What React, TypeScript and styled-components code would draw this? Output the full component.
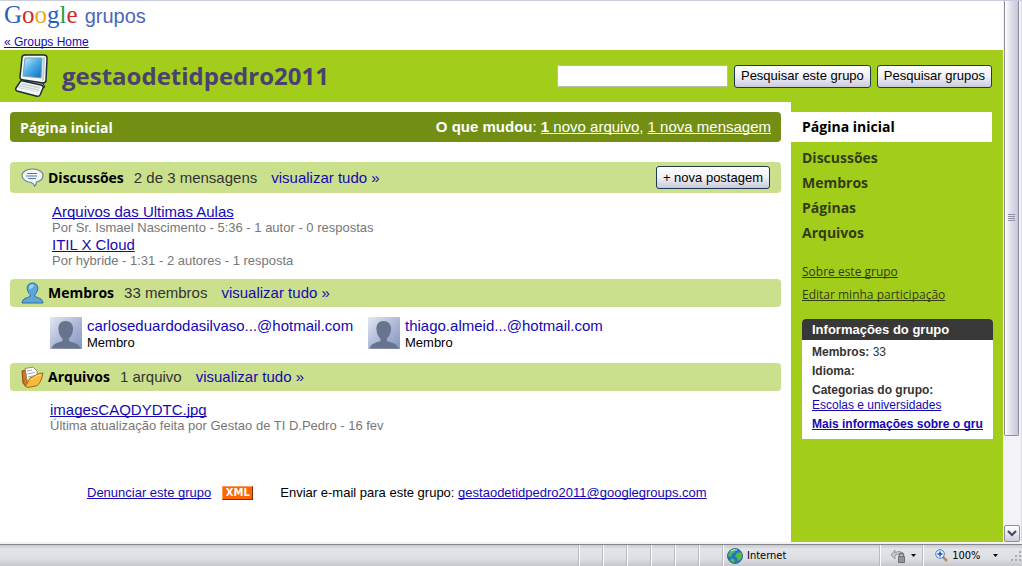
import React from "react";
import styled, { createGlobalStyle } from "styled-components";

const sans = `"Liberation Sans", Arial, sans-serif`;
const heading = `"Open Sans", "Noto Sans", sans-serif`;

const GlobalStyle = createGlobalStyle`
  * { box-sizing: border-box; }
  body {
    margin: 0;
    background: #fff;
    color: #000;
    font: 13px/16px ${sans};
    text-decoration-skip-ink: none;
  }
  h1, h2, h3, p, ul { margin: 0; padding: 0; }
  ul { list-style: none; }
  a { color: #1508b4; }
  svg { display: block; flex: none; }
`;

const Window = styled.div`
  min-height: 100vh;
  display: flex;
  flex-direction: column;
`;

const Viewport = styled.div`
  flex: 1;
  display: flex;
  border-top: 1px solid #c9cde0;
  border-bottom: 2px solid #f1f1f4;
`;

const Page = styled.div`
  flex: 1;
  min-width: 0;
  display: flex;
  flex-direction: column;
`;

const TopBar = styled.header`
  height: 49px;
  padding-left: 4px;
`;

const Logo = styled.div`
  display: flex;
  align-items: baseline;
  gap: 7px;
  height: 33px;
  line-height: 28px;
`;

const Wordmark = styled.span`
  font-family: "Liberation Serif", serif;
  font-size: 25px;
  -webkit-text-stroke: 1px transparent;
`;

const Letter = styled.span<{ $color: string }>`
  color: ${(p) => p.$color};
`;

const Product = styled.span`
  font-size: 20px;
  color: #4d66b8;
`;

const HomeLink = styled.a`
  display: block;
  width: fit-content;
  font-size: 12px;
`;

const Banner = styled.div`
  height: 52px;
  padding: 0 11px 0 14px;
  display: flex;
  align-items: center;
  background: #a2ce1b;
`;

const GroupName = styled.h1`
  flex: 1;
  margin-left: 14px;
  font: 700 24px/32px ${heading};
  color: #4a4170;
`;

const SearchForm = styled.form`
  display: flex;
  align-items: center;
  gap: 6px;
`;

const SearchInput = styled.input`
  width: 171px;
  height: 22px;
  padding: 0 4px;
  border: 1px solid #b5bfa5;
  background: #fff;
  font: 13px ${sans};
`;

const Button = styled.button`
  height: 23px;
  padding: 0 6px 1px;
  border: 1px solid #1d3a55;
  border-radius: 3px;
  background: linear-gradient(#fff, #f1f1f6 50%, #c9c9dc);
  color: #000;
  font: 13px ${sans};
  white-space: nowrap;
`;

const Columns = styled.div`
  flex: 1;
  display: flex;
`;

const Main = styled.main`
  flex: 1;
  min-width: 0;
  padding: 10px;
`;

const TitleBar = styled.div`
  height: 30px;
  margin-bottom: 20px;
  padding: 0 10px;
  display: flex;
  align-items: center;
  justify-content: space-between;
  border-radius: 4px;
  background: #728f14;
  color: #fff;
  font-size: 15px;
  a { color: #fff; }
`;

const PageTitle = styled.h2`
  padding-top: 2px;
  font: 700 14px/20px ${heading};
`;

const SectionBar = styled.div<{ $tall?: boolean }>`
  height: ${(p) => (p.$tall ? 31 : 28)}px;
  padding: 0 11px;
  display: flex;
  align-items: center;
  border-radius: 4px;
  background: #cae08c;
  font-size: 15px;
  color: #333;
`;

const SectionTitle = styled.h3`
  margin: 0 10px 0 4px;
  font: 700 14px/20px ${heading};
  color: #000;
`;

const SeeAll = styled.a`
  margin: 0 auto 0 14px;
  text-decoration: none;
`;

const List = styled.ul<{ $indent: number }>`
  padding: 10px 0 10px ${(p) => p.$indent}px;
`;

const ItemLink = styled.a`
  display: block;
  width: fit-content;
  font-size: 15px;
  line-height: 17px;
`;

const Meta = styled.p`
  color: #777;
`;

const Members = styled.ul`
  padding: 10px 0 12px 40px;
  display: flex;
`;

const Member = styled.li`
  width: 318px;
  display: flex;
  gap: 5px;
  a { display: block; font-size: 15px; line-height: 18px; text-decoration: none; }
`;

const Footer = styled.footer`
  padding: 41px 0 16px 77px;
  display: flex;
  align-items: center;
`;

const XmlBadge = styled.a`
  width: 31px;
  height: 14px;
  margin: 0 27px 0 11px;
  border: 1px solid;
  border-color: #ff9a55 #7a3000 #7a3000 #ff9a55;
  background: #f60;
  color: #fff;
  font: 700 10px/12px "DejaVu Sans", sans-serif;
  text-align: center;
  text-decoration: none;
`;

const Sidebar = styled.aside`
  width: 212px;
  padding: 10px 0;
  background: #a2ce1b;
`;

const NavLink = styled.a<{ $active?: boolean }>`
  display: block;
  margin: 0 11px ${(p) => (p.$active ? 3 : 0)}px 0;
  padding-left: 11px;
  font: 700 14px/${(p) => (p.$active ? 30 : 25)}px ${heading};
  background: ${(p) => (p.$active ? "#fff" : "none")};
  color: ${(p) => (p.$active ? "#000" : "#333c12")};
  text-decoration: none;
`;

const SideLinks = styled.ul`
  padding: 15px 0 13px 11px;
  font: 12px/23px ${heading};
  a { color: #333c12; }
`;

const InfoBox = styled.section`
  margin: 0 10px 0 11px;
  border-radius: 4px 4px 0 0;
  background: #fff;
  overflow: hidden;
  font-size: 12px;
  line-height: 15px;
  color: #333;
`;

const InfoTitle = styled.h3`
  padding: 0 10px;
  background: #383838;
  color: #fff;
  font: 700 13px/21px ${sans};
`;

const InfoBody = styled.div`
  padding: 5px 10px 7px;
  display: flex;
  flex-direction: column;
  gap: 4px;
`;

const InfoRow = styled.div`
  overflow: hidden;
  white-space: nowrap;
`;

const Scrollbar = styled.div`
  width: 19px;
  padding: 0 2px 0 1px;
  display: flex;
  flex-direction: column;
  background: #f3f3f7;
  border-right: 1px solid #dcdce6;
`;

const Thumb = styled.div`
  flex: 83;
  display: flex;
  align-items: center;
  justify-content: center;
  border: 1px solid #8d8d9b;
  border-top: 0;
  border-radius: 0 0 2px 2px;
  background: linear-gradient(90deg, #fff, #e3e3ec 40%, #c6c6d8);
`;

const Track = styled.div`
  flex: 17;
`;

const ScrollButton = styled.button`
  width: 16px;
  height: 17px;
  padding: 0;
  display: flex;
  align-items: center;
  justify-content: center;
  border: 1px solid #8d8d9b;
  border-radius: 2px;
  background: linear-gradient(#fff, #cfcfdd);
`;

const StatusBar = styled.div`
  height: 22px;
  display: flex;
  border-top: 1px solid #85858c;
  background: linear-gradient(#c9cacf, #e4e5e9 20%, #dcdde2 70%, #c5c6cc);
  font: 11px/20px "DejaVu Sans Condensed", "DejaVu Sans", sans-serif;
`;

const StatusCell = styled.div<{ $width?: number }>`
  ${(p) => (p.$width ? `width: ${p.$width}px;` : "flex: 1;")}
  padding-left: 4px;
  display: flex;
  align-items: center;
  gap: 4px;
  & + & { border-left: 1px solid #b9bac2; box-shadow: inset 1px 0 #fafafc; }
`;

const Push = styled.span`
  flex: 1;
`;

const ComputerIcon = () => (
  <svg width="34" height="44" viewBox="0 0 34 44" aria-hidden="true">
    <defs>
      <linearGradient id="screen" x1="0" y1="0" x2="1" y2="1">
        <stop offset="0" stopColor="#d3effb" />
        <stop offset=".45" stopColor="#4fb0e8" />
        <stop offset="1" stopColor="#0b69b8" />
      </linearGradient>
    </defs>
    <path d="M14 26l14 2 3 5-7 3-10-4z" fill="#aeb8bc" stroke="#1e2b35" />
    <path d="M8 4q0-3 3-3h19q3 0 3 3l-1 22q0 3-3 3L10 26q-4 0-4-3z" fill="#f6fafc" stroke="#1e2b35" strokeWidth="1.5" />
    <path d="M29 3h2l-1 23-2 1z" fill="#c3cdd2" />
    <path d="M11 4h17l-1 20L9 22z" fill="url(#screen)" stroke="#7f9bab" />
    <path d="M9 27l18 4q3 1 2 3l-3 7q-1 2-4 1L3 37q-2-1-1-3l4-6q1-2 3-1z" fill="#f4f7f8" stroke="#1e2b35" strokeWidth="1.5" />
    <path d="M8 29l18 4-2 5L4 34z" fill="#cbd2d6" />
    <path d="M7 31l18 4M6 33l18 4" stroke="#eef1f3" fill="none" />
  </svg>
);

const SpeechIcon = () => (
  <svg width="23" height="19" viewBox="0 0 23 19" aria-hidden="true">
    <path d="M11.5 1C5 1 1 4 1 7.500C1 11 5 14 10 14.500q3 1 3.500 3.500q2-1.500 2-4C20 13 22 10.500 22 7.500C22 4 18 1 11.500 1z" fill="#f3f6fb" stroke="#71808c" strokeWidth="1.200" />
    <path d="M6 5.500h10M5 8h11M7 10.500h8" stroke="#5576a4" strokeWidth="1.200" />
  </svg>
);

const MemberIcon = () => (
  <svg width="23" height="22" viewBox="0 0 23 22" aria-hidden="true">
    <path d="M11.500 1C8 1 6 3.500 6.200 6.500c.2 3 1.500 4.500 2.800 6v2C6 16 1.500 16 1 21h21c-.5-5-5-5-8-6.500v-2c1.300-1.500 2.600-3 2.800-6C17 3.500 15 1 11.500 1z" fill="#5ca6dc" stroke="#2f6a99" />
    <path d="M11 2.500C8.500 2.700 7.500 5 8.500 7.500q3-1 5-4.500z" fill="#9fd2f5" />
  </svg>
);

const FolderIcon = () => (
  <svg width="23" height="22" viewBox="0 0 23 22" aria-hidden="true">
    <path d="M1 5l4-1 2 2v13l-2 2L2 17z" fill="#d9701d" stroke="#8a4a10" />
    <path d="M4 2.500L12 1l4 4 1 11-10 3z" fill="#fff" stroke="#8b8b80" />
    <path d="M6 5l5-1M6.500 8l7-1.500M7 11l7-1.500" stroke="#a4a49c" />
    <path d="M22 7q-2 11-7 13L6 21.500 4.500 20 9 12q4-1 6-3 3-2 7-2z" fill="#f6b93b" stroke="#a8690e" />
    <path d="M20 9q-5 0-7 3l-3 2" stroke="#ffe49a" fill="none" />
  </svg>
);

const Avatar = () => (
  <svg width="32" height="32" viewBox="0 0 32 32" aria-hidden="true">
    <defs>
      <linearGradient id="avatar" x1="0" y1="0" x2="1" y2="1">
        <stop offset="0" stopColor="#e2e7f3" />
        <stop offset=".6" stopColor="#a5b2d2" />
        <stop offset="1" stopColor="#8295c3" />
      </linearGradient>
    </defs>
    <path d="M0 0h32v32H0z" fill="url(#avatar)" />
    <path d="M15.500 4C10 4 8 8 8.500 13c.3 4 1.800 6.500 4 8.500V24c-3 1.500-9.500 2-11 7.500h29C29 26 22 25.500 19 24v-2.500c2-2 3.500-4.500 4-8.500C23.500 8 21 4 15.500 4z" fill="#68748e" />
  </svg>
);

const Grip = () => (
  <svg width="7" height="8" viewBox="0 0 7 8" aria-hidden="true">
    <path d="M0 .5h7M0 2.500h7M0 4.500h7M0 6.500h7" stroke="#8f8fa6" />
  </svg>
);

const ChevronIcon = () => (
  <svg width="10" height="7" viewBox="0 0 10 7" aria-hidden="true">
    <path d="M1 1l4 4 4-4" stroke="#3c4a5e" strokeWidth="2" fill="none" />
  </svg>
);

const GlobeIcon = () => (
  <svg width="16" height="16" viewBox="0 0 16 16" aria-hidden="true">
    <circle cx="8" cy="8" r="7.500" fill="#2573c9" stroke="#3a668f" />
    <path d="M3 3q3-3 6-2L8 4 5 6 4 9 1 8q0-3 2-5zM10 5l4-1q2 4 0 7l-3 2-1-3-2-2zM5 10l3 2-1 3q-3-1-4-3z" fill="#4fbb4a" />
    <path d="M4 3q3-2 6-1" stroke="#c9ecff" fill="none" />
  </svg>
);

const LockIcon = () => (
  <svg width="17" height="15" viewBox="0 0 17 15" aria-hidden="true">
    <path d="M1 7l4-5v3q6-4 8 2-4-2-8 0v4z" fill="#c6c7cb" stroke="#999aa1" />
    <path d="M9.500 9V7q0-2 2-2t2 2v2" fill="none" stroke="#77787d" strokeWidth="1.500" />
    <path d="M8.500 8.500h6v6h-6z" fill="#94959a" stroke="#6c6d72" />
  </svg>
);

const ZoomIcon = () => (
  <svg width="13" height="13" viewBox="0 0 13 13" aria-hidden="true">
    <path d="M8 8l4 4" stroke="#b58b5d" strokeWidth="2.500" />
    <circle cx="5" cy="5" r="4.300" fill="#e4f2ff" stroke="#477cba" />
    <path d="M5 2.500v5M2.500 5h5" stroke="#1c57a8" strokeWidth="1.500" />
  </svg>
);

const Caret = () => (
  <svg width="5" height="3" viewBox="0 0 5 3" aria-hidden="true">
    <path d="M0 0h5L2.500 3z" fill="#000" />
  </svg>
);

const ResizeGrip = () => (
  <svg width="12" height="12" viewBox="0 0 12 12" aria-hidden="true">
    <path d="M9 1h2v2H9zM5 5h2v2H5zM9 5h2v2H9zM1 9h2v2H1zM5 9h2v2H5zM9 9h2v2H9z" fill="#a9aab2" />
  </svg>
);

const logo: [string, string][] = [
  ["G", "#2d5cc8"],
  ["o", "#d02a2a"],
  ["o", "#e8ad14"],
  ["g", "#2d5cc8"],
  ["l", "#2c9a45"],
  ["e", "#d02a2a"],
];

const discussions = [
  { title: "Arquivos das Ultimas Aulas", meta: "Por Sr. Ismael Nascimento - 5:36 - 1 autor - 0 respostas" },
  { title: "ITIL X Cloud", meta: "Por hybride - 1:31 - 2 autores - 1 resposta" },
];

const members = ["carloseduardodasilvaso...@hotmail.com", "thiago.almeid...@hotmail.com"];

export default function App() {
  return (
    <Window>
      <GlobalStyle />
      <Viewport>
        <Page>
          <TopBar>
            <Logo>
              <Wordmark>
                {logo.map(([char, color], i) => (
                  <Letter key={i} $color={color}>{char}</Letter>
                ))}
              </Wordmark>
              <Product>grupos</Product>
            </Logo>
            <HomeLink href="#home">« Groups Home</HomeLink>
          </TopBar>
          <Banner>
            <ComputerIcon />
            <GroupName>gestaodetidpedro2011</GroupName>
            <SearchForm onSubmit={(e) => e.preventDefault()}>
              <SearchInput type="text" aria-label="Pesquisar" />
              <Button type="submit">Pesquisar este grupo</Button>
              <Button type="button">Pesquisar grupos</Button>
            </SearchForm>
          </Banner>
          <Columns>
            <Main>
              <TitleBar>
                <PageTitle>Página inicial</PageTitle>
                <p>
                  <b>O que mudou</b>: <a href="#arquivos"><b>1</b> novo arquivo</a>,{" "}
                  <a href="#discussoes">1 nova mensagem</a>
                </p>
              </TitleBar>

              <SectionBar $tall>
                <SpeechIcon />
                <SectionTitle>Discussões</SectionTitle>
                <span>2 de 3 mensagens</span>
                <SeeAll href="#discussoes">visualizar tudo »</SeeAll>
                <Button type="button">+ nova postagem</Button>
              </SectionBar>
              <List $indent={42}>
                {discussions.map((d) => (
                  <li key={d.title}>
                    <ItemLink href="#discussoes">{d.title}</ItemLink>
                    <Meta>{d.meta}</Meta>
                  </li>
                ))}
              </List>

              <SectionBar>
                <MemberIcon />
                <SectionTitle>Membros</SectionTitle>
                <span>33 membros</span>
                <SeeAll href="#membros">visualizar tudo »</SeeAll>
              </SectionBar>
              <Members>
                {members.map((m) => (
                  <Member key={m}>
                    <Avatar />
                    <div>
                      <a href="#membros">{m}</a>
                      <p>Membro</p>
                    </div>
                  </Member>
                ))}
              </Members>

              <SectionBar>
                <FolderIcon />
                <SectionTitle>Arquivos</SectionTitle>
                <span>1 arquivo</span>
                <SeeAll href="#arquivos">visualizar tudo »</SeeAll>
              </SectionBar>
              <List $indent={40}>
                <li>
                  <ItemLink href="#arquivos">imagesCAQDYDTC.jpg</ItemLink>
                  <Meta>Última atualização feita por Gestao de TI D.Pedro - 16 fev</Meta>
                </li>
              </List>

              <Footer>
                <a href="#denunciar">Denunciar este grupo</a>
                <XmlBadge href="#xml">XML</XmlBadge>
                <span>
                  Enviar e-mail para este grupo:{" "}
                  <a href="mailto:gestaodetidpedro2011@googlegroups.com">gestaodetidpedro2011@googlegroups.com</a>
                </span>
              </Footer>
            </Main>

            <Sidebar>
              <nav>
                <NavLink href="#inicio" $active>Página inicial</NavLink>
                <NavLink href="#discussoes">Discussões</NavLink>
                <NavLink href="#membros">Membros</NavLink>
                <NavLink href="#paginas">Páginas</NavLink>
                <NavLink href="#arquivos">Arquivos</NavLink>
              </nav>
              <SideLinks>
                <li><a href="#sobre">Sobre este grupo</a></li>
                <li><a href="#editar">Editar minha participação</a></li>
              </SideLinks>
              <InfoBox>
                <InfoTitle>Informações do grupo</InfoTitle>
                <InfoBody>
                  <InfoRow><b>Membros:</b> 33</InfoRow>
                  <InfoRow><b>Idioma:</b></InfoRow>
                  <InfoRow>
                    <b>Categorias do grupo:</b>
                    <br />
                    <a href="#escolas">Escolas e universidades</a>
                  </InfoRow>
                  <InfoRow><a href="#mais"><b>Mais informações sobre o grupo</b></a></InfoRow>
                </InfoBody>
              </InfoBox>
            </Sidebar>
          </Columns>
        </Page>
        <Scrollbar>
          <Thumb><Grip /></Thumb>
          <Track />
          <ScrollButton type="button" aria-label="Rolar para baixo"><ChevronIcon /></ScrollButton>
        </Scrollbar>
      </Viewport>
      <StatusBar>
        <StatusCell />
        <StatusCell $width={24} />
        <StatusCell $width={24} />
        <StatusCell $width={24} />
        <StatusCell $width={24} />
        <StatusCell $width={24} />
        <StatusCell $width={24} />
        <StatusCell $width={157}><GlobeIcon />Internet</StatusCell>
        <StatusCell $width={43}><Push /><LockIcon /><Caret /><Push /></StatusCell>
        <StatusCell $width={100}><Push /><ZoomIcon />100%<Push /><Caret /><Push /><ResizeGrip /></StatusCell>
      </StatusBar>
    </Window>
  );
}
